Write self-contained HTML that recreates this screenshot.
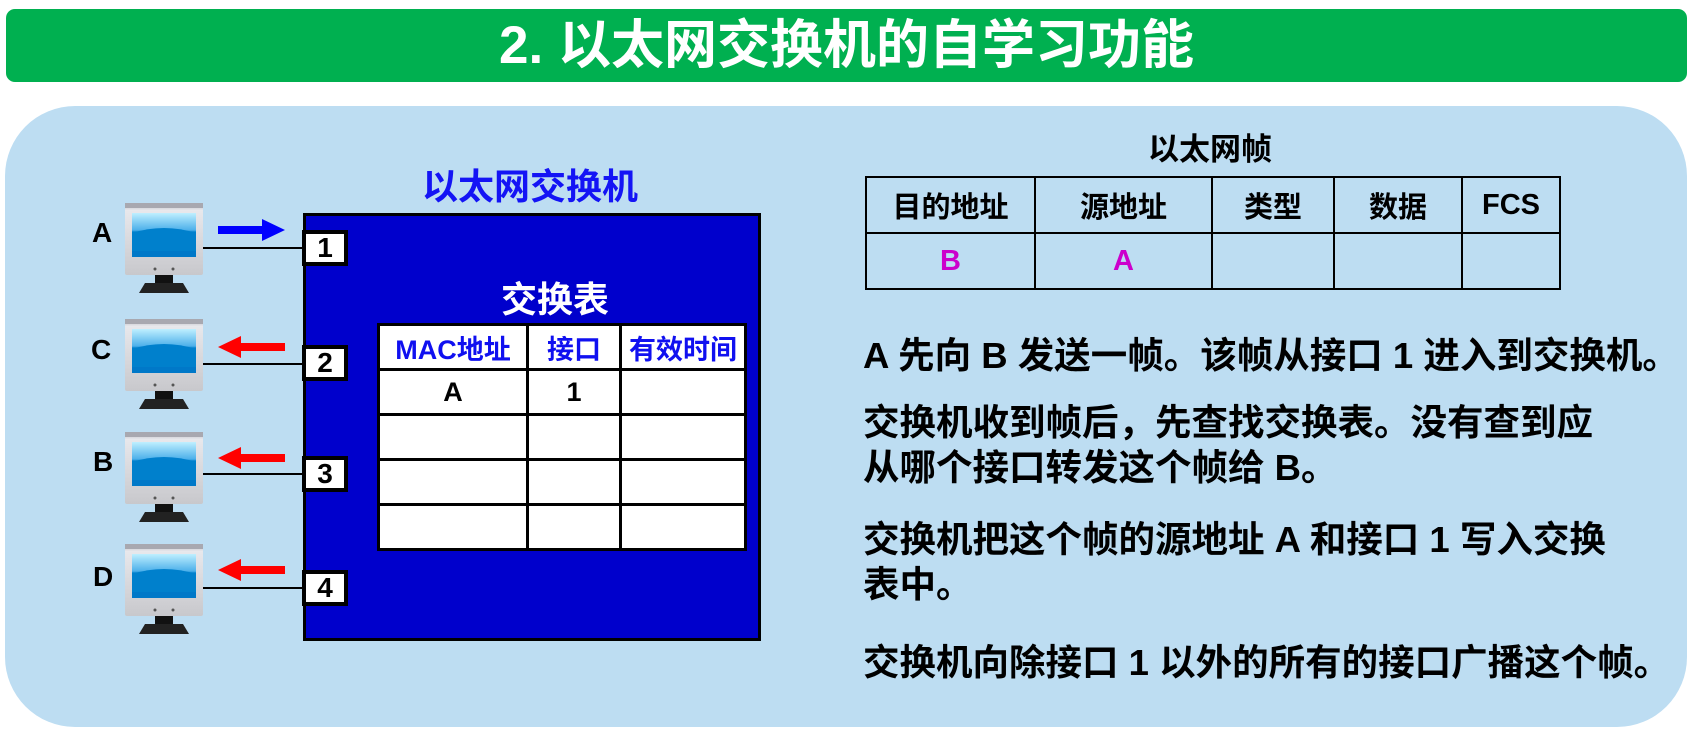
<!DOCTYPE html>
<html><head><meta charset="utf-8"><style>
*{margin:0;padding:0;box-sizing:border-box}
body{width:1697px;height:742px;background:#fff;position:relative;overflow:hidden;font-family:"Liberation Sans","Noto Sans CJK SC",sans-serif;font-weight:bold}
.a{position:absolute}
.title{left:6px;top:9px;width:1681px;height:73px;background:#00B050;border-radius:9px;color:#fff;font-size:53px;text-align:center;line-height:73px}
.panel{left:5px;top:106px;width:1682px;height:621px;background:#BDDDF2;border-radius:70px}
.sw{left:303px;top:213px;width:458px;height:428px;background:#0000CC;border:3px solid #000}
.port{width:46px;height:36px;background:#fff;border:4px solid #000;font-size:28px;text-align:center;line-height:28px;color:#000}
.lbl{font-size:28px;color:#000}
.line{height:2px;background:#000}
table{border-collapse:collapse}
.t1 td{border:3px solid #000;background:#fff;text-align:center;height:45px;font-size:27px}
.t2 td{border:2px solid #000;text-align:center;font-size:29px}
.txt{left:863px;font-size:36.5px;color:#000;line-height:45px;white-space:nowrap}
</style></head><body>
<div class="a title">2. 以太网交换机的自学习功能</div>
<div class="a panel"></div>
<div class="a" style="left:420px;top:158px;width:220px;text-align:center;font-size:36px;color:#1414F5">以太网交换机</div>
<div class="a sw"></div>
<div class="a" style="left:450px;top:278px;width:210px;text-align:center;font-size:36px;color:#fff;line-height:44px">交换表</div>
<table class="a t1" style="left:377px;top:323px;width:370px">
<tr style="color:#1010F0"><td style="width:149px">MAC地址</td><td style="width:93px">接口</td><td>有效时间</td></tr>
<tr><td>A</td><td>1</td><td></td></tr>
<tr><td></td><td></td><td></td></tr>
<tr><td></td><td></td><td></td></tr>
<tr><td></td><td></td><td></td></tr>
</table>

<div class="a port" style="left:302px;top:230px">1</div>
<div class="a port" style="left:302px;top:345px">2</div>
<div class="a port" style="left:302px;top:456px">3</div>
<div class="a port" style="left:302px;top:570px">4</div>

<svg width="0" height="0" style="position:absolute"><defs>
<linearGradient id="scr" x1="0" y1="0" x2="0" y2="1"><stop offset="0" stop-color="#BFEFFF"/><stop offset="0.45" stop-color="#4DB0EA"/><stop offset="0.5" stop-color="#0080CC"/><stop offset="1" stop-color="#0078C8"/></linearGradient>
<linearGradient id="frm" x1="0" y1="0" x2="0" y2="1"><stop offset="0" stop-color="#B0B0B8"/><stop offset="0.1" stop-color="#E8E8EC"/><stop offset="1" stop-color="#C8C8CC"/></linearGradient>
<g id="pc">
<rect x="0" y="0" width="78" height="72" rx="2" fill="url(#frm)"/>
<rect x="0" y="0" width="78" height="5" fill="#A8A8B0"/>
<rect x="7" y="10" width="64" height="38" fill="url(#scr)"/>
<path d="M7 30 Q39 20 71 30 L71 48 L7 48Z" fill="#0080CC"/>
<rect x="7" y="48" width="64" height="6" fill="#0078C8"/>
<circle cx="30" cy="66" r="1.5" fill="#555"/><circle cx="48" cy="66" r="1.5" fill="#555"/>
<rect x="30" y="72" width="18" height="8" fill="#111"/>
<path d="M14 90 L20 80 L58 80 L64 90Z" fill="#222"/>
</g></defs></svg>
<svg class="a" style="left:125px;top:203px" width="80" height="92"><use href="#pc"/></svg>
<svg class="a" style="left:125px;top:319px" width="80" height="92"><use href="#pc"/></svg>
<svg class="a" style="left:125px;top:432px" width="80" height="92"><use href="#pc"/></svg>
<svg class="a" style="left:125px;top:544px" width="80" height="92"><use href="#pc"/></svg>

<div class="a lbl" style="left:92px;top:217px">A</div>
<div class="a lbl" style="left:91px;top:334px">C</div>
<div class="a lbl" style="left:93px;top:446px">B</div>
<div class="a lbl" style="left:93px;top:561px">D</div>

<div class="a line" style="left:203px;top:247px;width:100px"></div>
<div class="a line" style="left:203px;top:363px;width:100px"></div>
<div class="a line" style="left:203px;top:473px;width:100px"></div>
<div class="a line" style="left:203px;top:587px;width:100px"></div>

<svg class="a" style="left:218px;top:218px" width="68" height="24"><path d="M0 8 H44 V1 L67 12 L44 23 V16 H0Z" fill="#0000FF"/></svg>
<svg class="a" style="left:218px;top:335px" width="68" height="24"><path d="M67 8 H23 V1 L0 12 L23 23 V16 H67Z" fill="#FF0000"/></svg>
<svg class="a" style="left:218px;top:446px" width="68" height="24"><path d="M67 8 H23 V1 L0 12 L23 23 V16 H67Z" fill="#FF0000"/></svg>
<svg class="a" style="left:218px;top:558px" width="68" height="24"><path d="M67 8 H23 V1 L0 12 L23 23 V16 H67Z" fill="#FF0000"/></svg>

<div class="a" style="left:1110px;top:124px;width:200px;text-align:center;font-size:31px;color:#000">以太网帧</div>
<table class="a t2" style="left:865px;top:176px;width:696px">
<tr style="height:56px"><td style="width:169px">目的地址</td><td style="width:177px">源地址</td><td style="width:122px">类型</td><td style="width:128px">数据</td><td>FCS</td></tr>
<tr style="height:56px;color:#CC00CC"><td>B</td><td>A</td><td></td><td></td><td></td></tr>
</table>

<div class="a txt" style="top:333px">A 先向 B 发送一帧。该帧从接口 1 进入到交换机。</div>
<div class="a txt" style="top:400px">交换机收到帧后，先查找交换表。没有查到应<br>从哪个接口转发这个帧给 B。</div>
<div class="a txt" style="top:517px">交换机把这个帧的源地址 A 和接口 1 写入交换<br>表中。</div>
<div class="a txt" style="top:640px">交换机向除接口 1 以外的所有的接口广播这个帧。</div>
</body></html>
